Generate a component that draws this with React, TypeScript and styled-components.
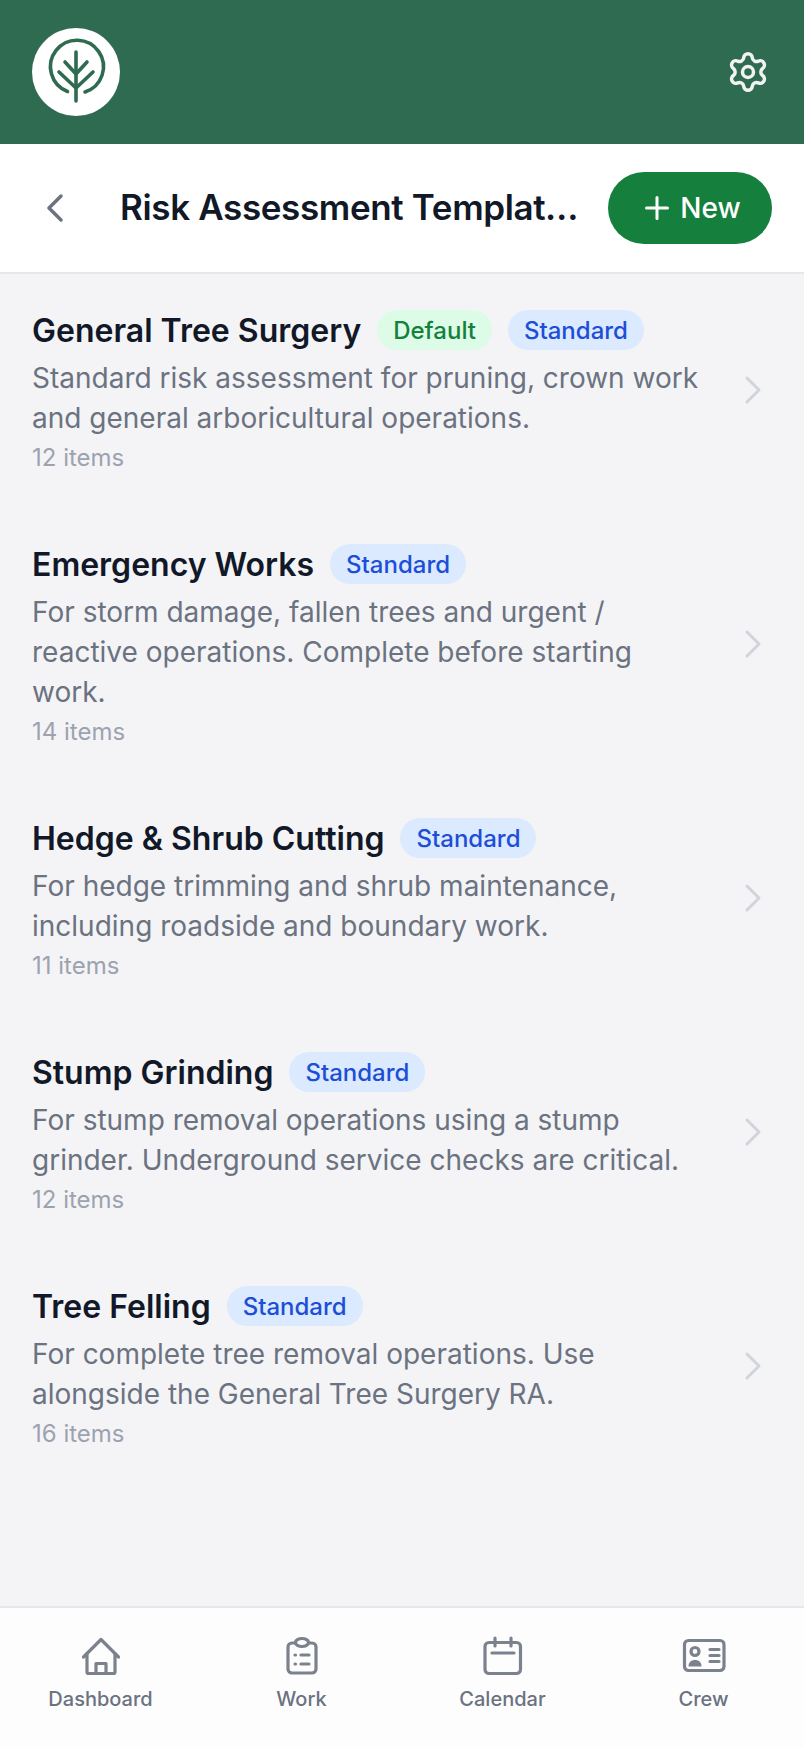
import React from 'react';
import styled, { createGlobalStyle } from 'styled-components';
import { Settings, ChevronLeft, ChevronRight, Plus } from 'lucide-react';

const GlobalStyle = createGlobalStyle`
    html, body {
        margin: 0;
        padding: 0;
        background: #f4f4f7;
    }
    * {
        box-sizing: border-box;
    }
    body {
        font-family: Inter, "Liberation Sans", sans-serif;
    }
`;

const Page = styled.div`
    width: 804px;
    height: 1748px;
    display: flex;
    flex-direction: column;
    background-color: #f4f4f7;
    overflow: hidden;
`;

const TopBar = styled.header`
    height: 144px;
    flex-shrink: 0;
    padding: 0 32px;
    display: flex;
    align-items: center;
    justify-content: space-between;
    background-color: #2f6b50;
`;

const LogoCircle = styled.div`
    width: 88px;
    height: 88px;
    border-radius: 50%;
    background-color: #fff;
`;

const IconBtn = styled.button`
    width: 44px;
    height: 44px;
    padding: 0;
    margin-right: 2px;
    display: flex;
    align-items: center;
    justify-content: center;
    border: none;
    background: none;
    color: #f1f3f2;
`;

const SubHeader = styled.div`
    height: 130px;
    flex-shrink: 0;
    padding: 0 32px 0 35px;
    display: flex;
    align-items: center;
    background-color: #fff;
    border-bottom: 2px solid #e5e7eb;
`;

const BackBtn = styled.button`
    width: 40px;
    height: 48px;
    padding: 0;
    margin-right: 45px;
    display: flex;
    align-items: center;
    justify-content: center;
    border: none;
    background: none;
    color: #6b7280;
    flex-shrink: 0;
    svg {
        flex-shrink: 0;
    }
`;

const PageTitle = styled.h1`
    flex: 1;
    min-width: 0;
    margin: 0 24px 2px 0;
    font-size: 35px;
    line-height: 48px;
    font-weight: 600;
    letter-spacing: -0.36px;
    color: #111827;
    white-space: nowrap;
    overflow: hidden;
    text-overflow: ellipsis;
`;

const NewBtn = styled.button`
    width: 164px;
    height: 72px;
    flex-shrink: 0;
    padding: 0;
    display: flex;
    align-items: center;
    justify-content: center;
    gap: 5px;
    border: none;
    border-radius: 36px;
    background-color: #15803d;
    color: #fff;
    font-family: inherit;
    font-size: 28px;
    font-weight: 500;
`;

const List = styled.main`
    flex: 1;
`;

const Item = styled.div`
    padding: 36px 32px 34px;
    display: flex;
    align-items: center;
    gap: 24px;
`;

const ItemBody = styled.div`
    flex: 1;
    min-width: 0;
`;

const TitleRow = styled.div`
    height: 40px;
    margin-bottom: 8px;
    display: flex;
    align-items: center;
    gap: 16px;
`;

const ItemTitle = styled.span`
    font-size: 32px;
    font-weight: 600;
    color: #111827;
`;

const Badge = styled.span<{ $tone: 'green' | 'blue' }>`
    height: 40px;
    padding: 0 16px;
    display: inline-flex;
    align-items: center;
    border-radius: 20px;
    font-size: 24px;
    font-weight: 500;
    background-color: ${(p) => (p.$tone === 'green' ? '#dcfce7' : '#dbeafe')};
    color: ${(p) => (p.$tone === 'green' ? '#15803d' : '#1d4ed8')};
`;

const Description = styled.p`
    margin: 0;
    font-size: 28px;
    line-height: 40px;
    color: #6b7280;
`;

const Count = styled.div`
    margin-top: 4px;
    font-size: 24px;
    line-height: 32px;
    color: #9ca3af;
`;

const ChevronBox = styled.div`
    width: 40px;
    height: 48px;
    flex-shrink: 0;
    margin-right: -1px;
    margin-bottom: 4px;
    display: flex;
    align-items: center;
    justify-content: center;
    color: #d1d5db;
    svg {
        flex-shrink: 0;
    }
`;

const BottomNav = styled.nav`
    height: 142px;
    flex-shrink: 0;
    display: grid;
    grid-template-columns: repeat(4, 1fr);
    background-color: #fdfdfe;
    border-top: 2px solid #e5e7eb;
`;

const NavItem = styled.div`
    padding-top: 28px;
    display: flex;
    flex-direction: column;
    align-items: center;
    color: #6b7280;
    font-size: 20px;
    line-height: 28px;
    font-weight: 500;
    svg {
        display: block;
        margin-bottom: 9px;
    }
`;

const TreeLogo = () => (
    <svg width="88" height="88" viewBox="0 0 88 88" fill="none" stroke="#2f6b50" strokeWidth="3.6" strokeLinecap="round" strokeLinejoin="round">
        <path d="M35.5 63.5A26.5 26.5 0 1 1 53 64" />
        <path d="M44 24V73" />
        <path d="M33 34L44 46L55 34" />
        <path d="M27 44L44 60L61 44" />
    </svg>
);

const navIconProps = {
    height: 40,
    fill: 'none',
    stroke: '#7b818d',
    strokeWidth: 3.2,
    strokeLinecap: 'round' as const,
    strokeLinejoin: 'round' as const,
};

const HomeIcon = () => (
    <svg {...navIconProps} width="40" viewBox="0 0 40 40">
        <path d="M2.5 21L20 3.5L37.5 21" />
        <path d="M6 17.5V36a1.5 1.5 0 0 0 1.5 1.5H32.5a1.5 1.5 0 0 0 1.5-1.5V17.5" />
        <path d="M15 37.5V27.5h10V37.5" />
    </svg>
);

const WorkIcon = () => (
    <svg {...navIconProps} width="40" viewBox="0 0 40 40">
        <path d="M13 7H10a4 4 0 0 0-4 4V33a4 4 0 0 0 4 4H30a4 4 0 0 0 4-4V11a4 4 0 0 0-4-4H27" />
        <ellipse cx="20" cy="6.5" rx="6.5" ry="4" />
        <path d="M13 19h.5M13 28h.5M19 19H27M19 28H27" />
    </svg>
);

const CalendarIcon = () => (
    <svg {...navIconProps} width="40" viewBox="0 0 40 40">
        <rect x="2" y="6.5" width="35.5" height="31" rx="4" />
        <path d="M12 2V10M28 2V10M9 17H31" />
    </svg>
);

const CrewIcon = () => (
    <svg {...navIconProps} width="44" viewBox="0 0 44 40">
        <rect x="2.5" y="4.5" width="39.5" height="30" rx="4" />
        <circle cx="13" cy="15.5" r="4" />
        <path d="M6.5 30.5C6.5 26 9.5 24 13 24S19.5 26 19.5 30.5Z" fill="#7b818d" stroke="none" />
        <path d="M28 13.5H37M28 19.5H37M28 25.5H37" />
    </svg>
);

const templates = [
    { title: 'General Tree Surgery', isDefault: true, desc: 'Standard risk assessment for pruning, crown work and general arboricultural operations.', count: 12 },
    { title: 'Emergency Works', desc: 'For storm damage, fallen trees and urgent / reactive operations. Complete before starting work.', count: 14 },
    { title: 'Hedge & Shrub Cutting', desc: 'For hedge trimming and shrub maintenance, including roadside and boundary work.', count: 11 },
    { title: 'Stump Grinding', desc: 'For stump removal operations using a stump grinder. Underground service checks are critical.', count: 12 },
    { title: 'Tree Felling', desc: 'For complete tree removal operations. Use alongside the General Tree Surgery RA.', count: 16 },
];

export default function App() {
    return (
        <Page>
            <GlobalStyle />
            <TopBar>
                <LogoCircle>
                    <TreeLogo />
                </LogoCircle>
                <IconBtn>
                    <Settings size={44} strokeWidth={1.9} />
                </IconBtn>
            </TopBar>
            <SubHeader>
                <BackBtn>
                    <ChevronLeft size={48} strokeWidth={1.75} />
                </BackBtn>
                <PageTitle>Risk Assessment Templates</PageTitle>
                <NewBtn>
                    <Plus size={36} strokeWidth={2} />
                    New
                </NewBtn>
            </SubHeader>
            <List>
                {templates.map((t) => (
                    <Item key={t.title}>
                        <ItemBody>
                            <TitleRow>
                                <ItemTitle>{t.title}</ItemTitle>
                                {t.isDefault && <Badge $tone="green">Default</Badge>}
                                <Badge $tone="blue">Standard</Badge>
                            </TitleRow>
                            <Description>{t.desc}</Description>
                            <Count>{t.count} items</Count>
                        </ItemBody>
                        <ChevronBox>
                            <ChevronRight size={48} strokeWidth={1.5} />
                        </ChevronBox>
                    </Item>
                ))}
            </List>
            <BottomNav>
                <NavItem>
                    <HomeIcon />
                    Dashboard
                </NavItem>
                <NavItem>
                    <WorkIcon />
                    Work
                </NavItem>
                <NavItem>
                    <CalendarIcon />
                    Calendar
                </NavItem>
                <NavItem>
                    <CrewIcon />
                    Crew
                </NavItem>
            </BottomNav>
        </Page>
    );
}
